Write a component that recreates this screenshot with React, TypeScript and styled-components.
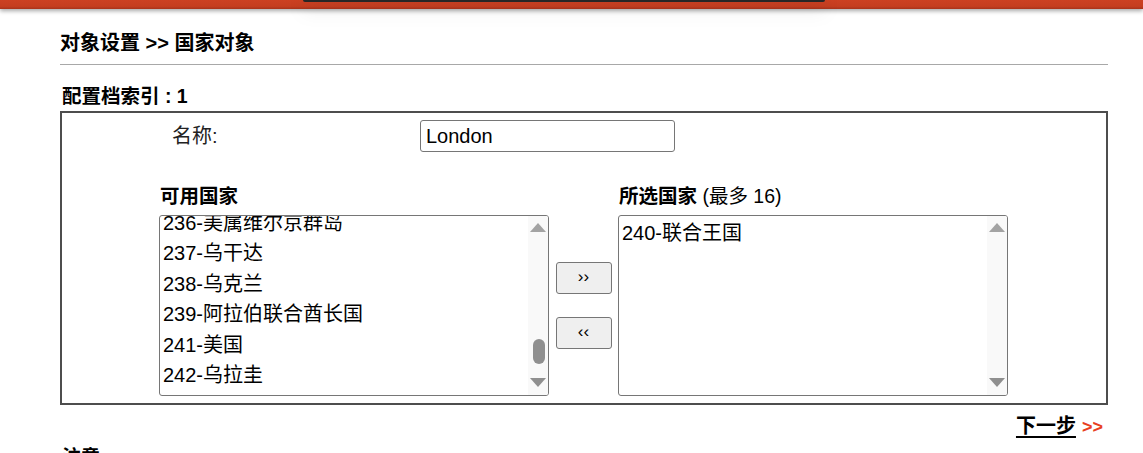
import React from "react";
import styled, { createGlobalStyle } from "styled-components";

const GlobalStyle = createGlobalStyle`
  html, body {
    margin: 0;
    padding: 0;
    background: #ffffff;
    overflow: hidden;
  }
  body {
    font-family: "Liberation Sans", "Noto Sans CJK SC", Arial, sans-serif;
    color: #000;
  }
`;

const FONT = `"Liberation Sans", "Noto Sans CJK SC", Arial, sans-serif`;

const Header = styled.header`
  height: 9px;
  background: linear-gradient(#cc4122 0%, #c53e20 70%, #a8331b 100%);
  box-shadow: 0 2px 4px rgba(0, 0, 0, 0.35);
  display: flex;
  align-items: flex-start;
  padding-left: 303px;
  position: relative;
  z-index: 2;
`;

const HeaderTab = styled.div`
  width: 522px;
  height: 2px;
  background: #262626;
  border-radius: 0 0 4px 4px;
  box-shadow: 0 6px 18px rgba(0, 0, 0, 0.35);
`;

const Page = styled.main`
  padding: 22px 35px 0 60px;
  display: flex;
  flex-direction: column;
`;

const Title = styled.h1`
  margin: 0;
  font: bold 20px/24px ${FONT};
  color: #000;
`;

const Rule = styled.hr`
  margin: 9px 0 0;
  border: none;
  border-top: 1px solid #a8a8a8;
  height: 0;
`;

const SectionLabel = styled.h2`
  margin: 19px 0 3px 2px;
  font: bold 19.5px/24px ${FONT};
  color: #000;
`;

const Box = styled.section`
  border: 2px solid #4d4d4d;
  padding: 7px 0 7px;
  display: flex;
  flex-direction: column;
`;

const NameRow = styled.div`
  display: grid;
  grid-template-columns: 248px 255px;
  align-items: center;
  padding-left: 110px;
`;

const NameLabel = styled.label`
  font: 20px/24px ${FONT};
  color: #222;
`;

const NameInput = styled.input`
  box-sizing: border-box;
  width: 255px;
  height: 32px;
  border: 1px solid #767676;
  border-radius: 3px;
  padding: 0 5px;
  font: 20px ${FONT};
  color: #000;
  background: #fff;
  outline: none;
`;

const PickArea = styled.div`
  display: grid;
  grid-template-columns: 390px 69px 390px;
  grid-template-rows: auto auto;
  padding-left: 97px;
  margin-top: 32px;
`;

const ColHeading = styled.div`
  font: bold 19.5px/24px ${FONT};
  margin: 0 0 7px 1px;
  color: #000;
`;

const Note = styled.span`
  font-weight: normal;
`;

const ListBox = styled.div`
  box-sizing: border-box;
  height: 181px;
  border: 1px solid #767676;
  border-radius: 3px;
  display: flex;
  overflow: hidden;
  background: #fff;
`;

const ListItems = styled.ul<{ $offset: number }>`
  list-style: none;
  margin: ${(p) => p.$offset}px 0 0;
  padding: 0 0 0 3px;
  flex: 1;
  min-width: 0;
`;

const ListItem = styled.li`
  height: 30.4px;
  font: 20px/30.4px ${FONT};
  color: #000;
  white-space: nowrap;
`;

const Track = styled.div`
  width: 20px;
  background: #f9f9f9;
  display: flex;
  flex-direction: column;
  align-items: center;
  padding: 7px 0 8px;
  box-sizing: border-box;
`;

const ArrowUp = styled.span`
  width: 0;
  height: 0;
  border-left: 8px solid transparent;
  border-right: 8px solid transparent;
  border-bottom: 9px solid #a3a3a3;
`;

const ArrowDown = styled.span`
  width: 0;
  height: 0;
  border-left: 8px solid transparent;
  border-right: 8px solid transparent;
  border-top: 9px solid #8f8f8f;
`;

const Spacer = styled.span`
  flex: 1;
`;

const Thumb = styled.span`
  width: 12px;
  height: 25px;
  border-radius: 6px;
  background: #8f8f8f;
  margin: 0 0 14px 1px;
`;

const MoveButtons = styled.div`
  display: flex;
  flex-direction: column;
  align-items: center;
  padding-top: 47px;
  gap: 23px;
`;

const MoveButton = styled.button`
  box-sizing: border-box;
  width: 56px;
  height: 32px;
  border: 1px solid #767676;
  border-radius: 3px;
  background: #efefef;
  font: 17px ${FONT};
  color: #000;
  padding: 0 0 2px;
  display: flex;
  align-items: center;
  justify-content: center;
`;

const Footer = styled.div`
  display: flex;
  justify-content: flex-end;
  padding: 9px 5px 0 0;
`;

const NextLink = styled.a`
  font: bold 20px/24px ${FONT};
  color: #000;
  text-decoration: none;
  display: flex;
  gap: 6px;
  align-items: baseline;
`;

const NextText = styled.span`
  text-decoration: underline;
  text-underline-offset: 3px;
  text-decoration-thickness: 2px;
`;

const NextArrows = styled.span`
  color: #e8401f;
  font-size: 18px;
`;

const NoteHeading = styled.div`
  font: bold 19px/24px ${FONT};
  margin: 7px 0 0 2px;
`;

interface ListProps {
  items: string[];
  offset: number;
  thumb?: boolean;
}

function CountryList({ items, offset, thumb }: ListProps) {
  return (
    <ListBox>
      <ListItems $offset={offset}>
        {items.map((it) => (
          <ListItem key={it}>{it}</ListItem>
        ))}
      </ListItems>
      <Track>
        <ArrowUp />
        <Spacer />
        {thumb && <Thumb />}
        <ArrowDown />
      </Track>
    </ListBox>
  );
}

const available = [
  "236-美属维尔京群岛",
  "237-乌干达",
  "238-乌克兰",
  "239-阿拉伯联合酋长国",
  "241-美国",
  "242-乌拉圭",
];

const selected = ["240-联合王国"];

export default function App() {
  return (
    <>
      <GlobalStyle />
      <Header>
        <HeaderTab />
      </Header>
      <Page>
        <Title>对象设置 &gt;&gt; 国家对象</Title>
        <Rule />
        <SectionLabel>配置档索引 : 1</SectionLabel>
        <Box>
          <NameRow>
            <NameLabel>名称:</NameLabel>
            <NameInput defaultValue="London" />
          </NameRow>
          <PickArea>
            <ColHeading>可用国家</ColHeading>
            <span />
            <ColHeading>
              所选国家 <Note>(最多 16)</Note>
            </ColHeading>
            <CountryList items={available} offset={-8} thumb />
            <MoveButtons>
              <MoveButton>››</MoveButton>
              <MoveButton>‹‹</MoveButton>
            </MoveButtons>
            <CountryList items={selected} offset={2} />
          </PickArea>
        </Box>
        <Footer>
          <NextLink href="#">
            <NextText>下一步</NextText>
            <NextArrows>&gt;&gt;</NextArrows>
          </NextLink>
        </Footer>
        <NoteHeading>注意</NoteHeading>
      </Page>
    </>
  );
}
